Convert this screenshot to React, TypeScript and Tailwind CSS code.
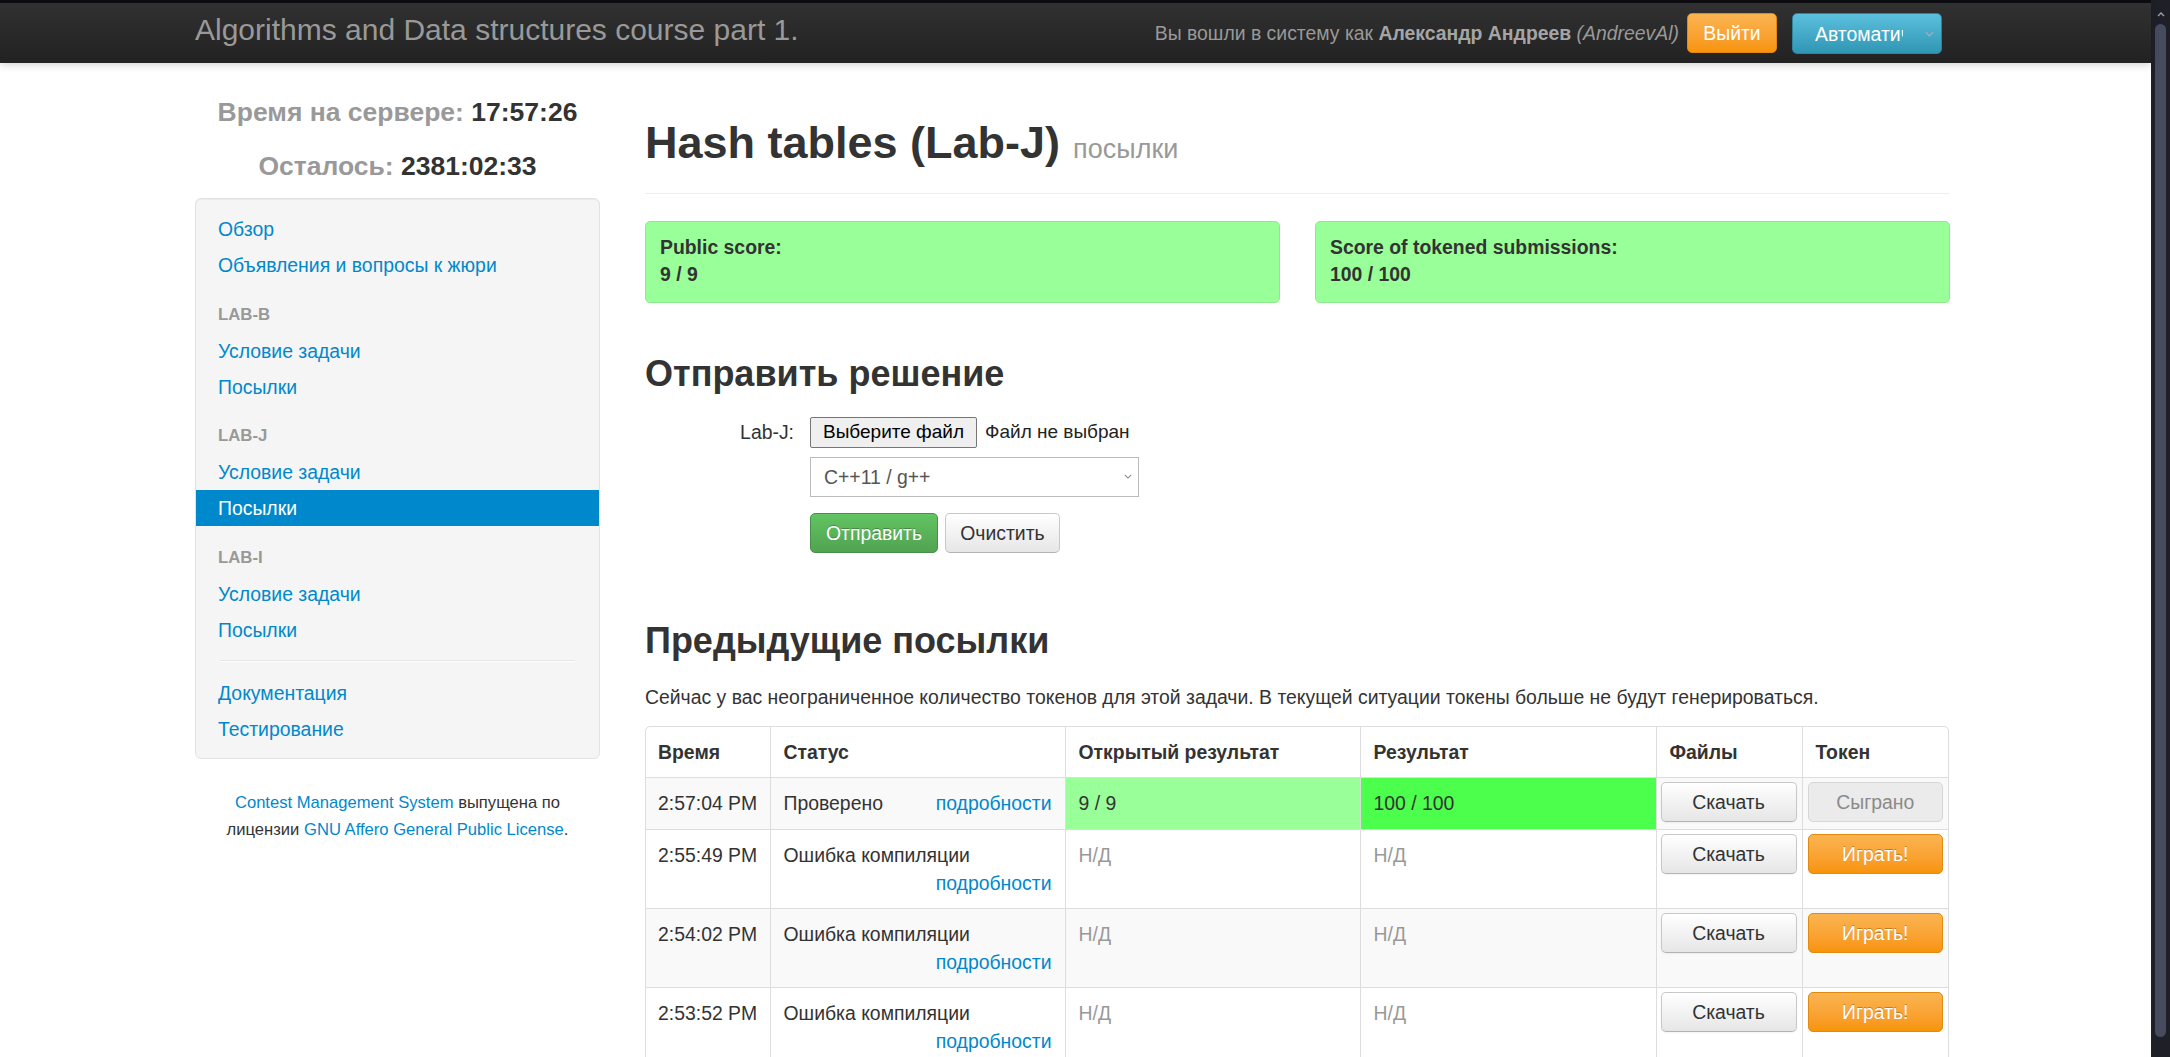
import React from "react";

function SideLink({ label, active }: { label: string; active?: boolean }) {
  if (active) {
    return <div className="h-[36px] pl-[22px] leading-[36px] bg-[#0088cc] text-white">{label}</div>;
  }
  return <div className="h-[36px] pl-[22px] leading-[36px] text-[#0088cc]">{label}</div>;
}

function SideHeader({ label }: { label: string }) {
  return (
    <div className="mt-[13.5px] h-[36px] pl-[22px] leading-[36px] text-[16.8px] font-bold uppercase text-[#999]">
      {label}
    </div>
  );
}

function Chevron({ className }: { className: string }) {
  return (
    <svg viewBox="0 0 10 6" className={className} fill="none" stroke="currentColor" strokeWidth="1.3">
      <path d="M1 1l4 4 4-4" />
    </svg>
  );
}

interface Submission {
  time: string;
  status: string;
  open: string;
  result: string;
  scored: boolean;
}

const submissions: Submission[] = [
  { time: "2:57:04 PM", status: "Проверено", open: "9 / 9", result: "100 / 100", scored: true },
  { time: "2:55:49 PM", status: "Ошибка компиляции", open: "Н/Д", result: "Н/Д", scored: false },
  { time: "2:54:02 PM", status: "Ошибка компиляции", open: "Н/Д", result: "Н/Д", scored: false },
  { time: "2:53:52 PM", status: "Ошибка компиляции", open: "Н/Д", result: "Н/Д", scored: false },
];

const btnDefault =
  "h-[40px] w-full rounded-[5px] border border-[#c8c8c8] border-b-[#b3b3b3] bg-gradient-to-b from-white to-[#e6e6e6] text-[#333] shadow-[inset_0_1px_0_rgba(255,255,255,0.2),0_1px_2px_rgba(0,0,0,0.05)]";
const btnOrange =
  "h-[40px] w-full rounded-[5px] border border-[#e08a12] bg-gradient-to-b from-[#fbb450] to-[#f89406] text-white [text-shadow:0_-1px_0_rgba(0,0,0,0.25)]";

export default function App() {
  return (
    <div className="flex h-[1057px] overflow-hidden bg-white font-['Liberation_Sans',Arial,Helvetica,sans-serif] text-[19.4px] leading-[28px] text-[#333]">
      <div className="min-w-0 flex-1">
        <div className="h-[3px] bg-[#0d0d11]" />

        {/* Navbar */}
        <div className="relative z-10 h-[60px] bg-gradient-to-b from-[#313131] to-[#222] shadow-[0_2px_8px_rgba(0,0,0,0.18)]">
          <div className="ml-[195px] flex h-full w-[1755px] items-center">
            <div className="-mt-[6px] text-[30px] leading-[40px] text-[#999]">Algorithms and Data structures course part 1.</div>
            <div className="ml-auto flex items-center pr-[8px]">
              <span className="text-[#999]">
                Вы вошли в систему как <b className="text-[#a5a5a5]">Александр Андреев</b> <i>(AndreevAl)</i>
              </span>
              <button className="-mt-[1px] ml-[8px] h-[40px] w-[90px] rounded-[5px] border border-[#e08a12] bg-gradient-to-b from-[#fbb450] to-[#f89406] text-white">
                Выйти
              </button>
              <div className="ml-[15px] mt-[1px] flex h-[41px] w-[150px] items-center rounded-[5px] border border-[#2a85a0] bg-gradient-to-b from-[#5bc0de] to-[#2f96b4] text-white">
                <div className="ml-[22px] w-[88px] overflow-hidden whitespace-nowrap">Автоматически</div>
                <Chevron className="ml-auto mr-[7px] h-[6px] w-[9px] text-[#9fb3ba]" />
              </div>
            </div>
          </div>
        </div>

        <div className="ml-[195px] flex w-[1755px]">
          {/* Sidebar */}
          <div className="w-[405px] shrink-0">
            <div className="mt-[31px] text-center text-[26.5px] font-bold leading-[36px]">
              <span className="text-[#999]">Время на сервере:</span> 17:57:26
            </div>
            <div className="mt-[18px] text-center text-[26.5px] font-bold leading-[36px]">
              <span className="text-[#999]">Осталось:</span> 2381:02:33
            </div>
            <div className="mt-[14px] rounded-[6px] border border-[#e3e3e3] bg-[#f5f5f5] pt-[12px] pb-[11px] shadow-[inset_0_1px_1px_rgba(0,0,0,0.05)]">
              <SideLink label="Обзор" />
              <SideLink label="Объявления и вопросы к жюри" />
              <SideHeader label="Lab-B" />
              <SideLink label="Условие задачи" />
              <SideLink label="Посылки" />
              <SideHeader label="Lab-J" />
              <SideLink label="Условие задачи" />
              <SideLink label="Посылки" active />
              <SideHeader label="Lab-I" />
              <SideLink label="Условие задачи" />
              <SideLink label="Посылки" />
              <div className="mx-[24px] my-[12.5px] h-[2px] border-b border-white bg-[#e5e5e5]" />
              <SideLink label="Документация" />
              <SideLink label="Тестирование" />
            </div>
            <div className="mt-[30px] text-center text-[16.6px] leading-[27px]">
              <span className="text-[#0088cc]">Contest Management System</span> выпущена по
              <br />
              лицензии <span className="text-[#0088cc]">GNU Affero General Public License</span>.
            </div>
          </div>

          {/* Main */}
          <div className="ml-[45px] w-[1305px]">
            <div className="mt-[49.5px] border-b border-[#eee] pb-[14px]">
              <h1 className="flex items-baseline text-[45px] font-bold leading-[60px]">
                Hash tables (Lab-J)
                <small className="ml-[13px] text-[27px] font-normal text-[#999]">посылки</small>
              </h1>
            </div>

            <div className="mt-[27px] flex gap-[35px]">
              <div className="flex-1 rounded-[5px] border border-[#8ee88e] bg-[#99ff99] px-[14px] pt-[12px] pb-[14px] font-bold leading-[27px]">
                Public score:
                <br />9 / 9
              </div>
              <div className="flex-1 rounded-[5px] border border-[#8ee88e] bg-[#99ff99] px-[14px] pt-[12px] pb-[14px] font-bold leading-[27px]">
                Score of tokened submissions:
                <br />
                100 / 100
              </div>
            </div>

            <h2 className="mt-[51px] text-[36px] font-bold leading-[40px]">Отправить решение</h2>

            <div className="mt-[23px] grid grid-cols-[149px_auto] gap-x-[16px]">
              <div className="self-center text-right">Lab-J:</div>
              <div className="flex h-[31px] items-center">
                <div className="flex h-[31px] w-[167px] items-center justify-center rounded-[2px] border border-[#767676] bg-[#efefef] text-[19px] text-black">
                  Выберите файл
                </div>
                <span className="ml-[8px] text-[19px] text-[#222]">Файл не выбран</span>
              </div>
              <div />
              <div className="mt-[9px] flex h-[40px] w-[329px] items-center border border-[#bbb] bg-white pl-[13px] text-[#555]">
                C++11 / g++
                <Chevron className="ml-auto mr-[6px] h-[5px] w-[8px] text-[#888]" />
              </div>
              <div />
              <div className="mt-[16px] flex gap-[7px]">
                <button className="h-[40px] w-[128px] rounded-[5px] border border-[#45914a] bg-gradient-to-b from-[#62c462] to-[#51a351] text-white [text-shadow:0_-1px_0_rgba(0,0,0,0.25)]">
                  Отправить
                </button>
                <button className="h-[40px] w-[115px] rounded-[5px] border border-[#c8c8c8] border-b-[#b3b3b3] bg-gradient-to-b from-white to-[#e6e6e6] text-[#333]">
                  Очистить
                </button>
              </div>
            </div>

            <h2 className="mt-[68.5px] text-[36px] font-bold leading-[40px]">Предыдущие посылки</h2>
            <p className="mt-[21.5px]">
              Сейчас у вас неограниченное количество токенов для этой задачи. В текущей ситуации токены больше не
              будут генерироваться.
            </p>

            <div className="mt-[15px] w-[1304px] overflow-hidden rounded-[5px] border border-[#ddd]">
              <table className="w-full table-fixed border-collapse">
                <colgroup>
                  <col className="w-[124px]" />
                  <col className="w-[295px]" />
                  <col className="w-[295px]" />
                  <col className="w-[296px]" />
                  <col className="w-[146px]" />
                  <col />
                </colgroup>
                <thead>
                  <tr className="text-left">
                    <th className="px-[12px] py-[11px] font-bold">Время</th>
                    <th className="border-l border-[#ddd] px-[13px] py-[11px] font-bold">Статус</th>
                    <th className="border-l border-[#ddd] px-[13px] py-[11px] font-bold">Открытый результат</th>
                    <th className="border-l border-[#ddd] px-[13px] py-[11px] font-bold">Результат</th>
                    <th className="border-l border-[#ddd] px-[13px] py-[11px] font-bold">Файлы</th>
                    <th className="border-l border-[#ddd] px-[13px] py-[11px] font-bold">Токен</th>
                  </tr>
                </thead>
                <tbody>
                  {submissions.map((s, i) => (
                    <tr key={s.time} className={i % 2 === 0 ? "bg-[#f9f9f9] align-top" : "bg-white align-top"}>
                      <td className="whitespace-nowrap border-t border-[#ddd] px-[12px] py-[11px]">{s.time}</td>
                      <td className="border-t border-l border-[#ddd] px-[13px] py-[11px]">
                        {s.scored ? (
                          <div className="flex justify-between">
                            <span>{s.status}</span>
                            <span className="text-[#0088cc]">подробности</span>
                          </div>
                        ) : (
                          <>
                            <div>{s.status}</div>
                            <div className="text-right text-[#0088cc]">подробности</div>
                          </>
                        )}
                      </td>
                      <td
                        className={
                          s.scored
                            ? "border-t border-l border-[#ddd] bg-[#99ff99] px-[13px] py-[11px]"
                            : "border-t border-l border-[#ddd] px-[13px] py-[11px] text-[#999]"
                        }
                      >
                        {s.open}
                      </td>
                      <td
                        className={
                          s.scored
                            ? "border-t border-l border-[#ddd] bg-[#4cff4c] px-[13px] py-[11px]"
                            : "border-t border-l border-[#ddd] px-[13px] py-[11px] text-[#999]"
                        }
                      >
                        {s.result}
                      </td>
                      <td className="border-t border-l border-[#ddd] pt-[4px] pb-[7px] pl-[4px] pr-[5px]">
                        <button className={btnDefault}>Скачать</button>
                      </td>
                      <td className="border-t border-l border-[#ddd] pt-[4px] pb-[7px] pl-[5px] pr-[5px]">
                        {s.scored ? (
                          <button className="h-[40px] w-full rounded-[5px] border border-[#d6d6d6] bg-[#ebebeb] text-[#8a8a8a]">
                            Сыграно
                          </button>
                        ) : (
                          <button className={btnOrange}>Играть!</button>
                        )}
                      </td>
                    </tr>
                  ))}
                </tbody>
              </table>
            </div>
          </div>
        </div>
      </div>

      {/* Scrollbar */}
      <div className="flex w-[19px] shrink-0 flex-col items-center bg-[#1f1f28]">
        <svg viewBox="0 0 8 5" className="mt-[12px] h-[5px] w-[8px] text-[#9aa0b0]" fill="none" stroke="currentColor" strokeWidth="1.4">
          <path d="M1 4l3-3 3 3" />
        </svg>
        <div className="mb-[20px] mt-[7px] w-[11px] flex-1 rounded-full bg-[#474b5e]" />
      </div>
    </div>
  );
}
